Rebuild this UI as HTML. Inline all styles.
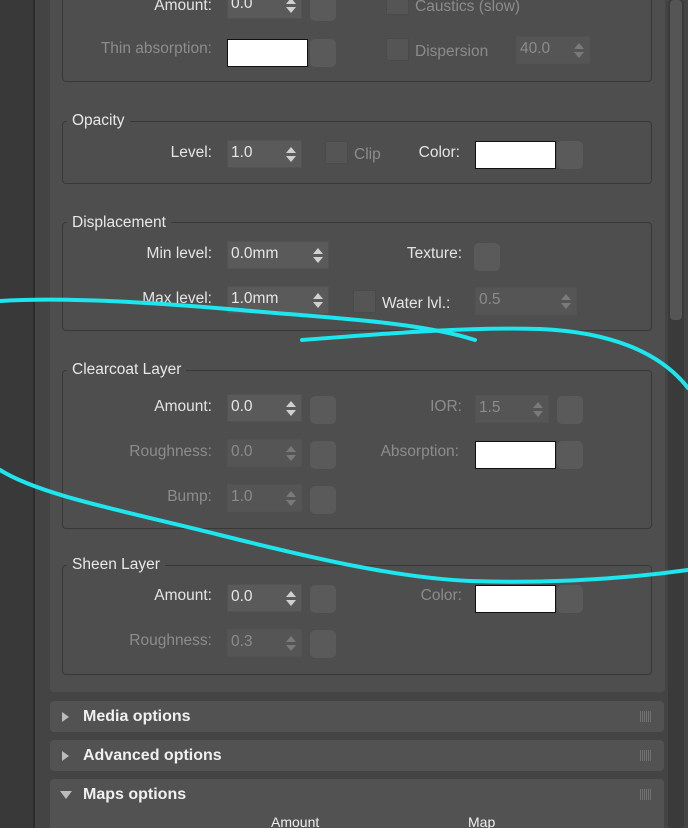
<!DOCTYPE html>
<html><head><meta charset="utf-8"><style>
*{box-sizing:border-box;margin:0;padding:0}
html{width:688px;height:828px;overflow:hidden}
body{width:688px;height:828px;overflow:hidden;background:#444;font-family:"Liberation Sans","DejaVu Sans",sans-serif;font-size:15.5px;color:#e4e4e4;position:relative}
.a{position:absolute}
.lbl{position:absolute;text-align:right;white-space:nowrap;line-height:18px;margin-top:1px}
.t{position:absolute;white-space:nowrap;line-height:18px;margin-top:1px}
.dis{color:#8c8c8c}
.grp{position:absolute;border:1px solid #383838;border-radius:4px}
.gt{position:absolute;background:#4e4e4e;padding:0 5px;line-height:18px;color:#e8e8e8;margin-top:1px}
.sp{position:absolute;height:28px;background:#5a5a5a;border:1px solid #535353;padding:2px 0 0 3px;line-height:20px;color:#e6e6e6}
.sp.d{color:#8c8c8c;background:#555}
.sp:after{content:"";position:absolute;right:5px;top:6px;border:5px solid transparent;border-top:none;border-bottom:6px solid #d0d0d0;width:0}
.sp:before{content:"";position:absolute;right:5px;top:15px;border:5px solid transparent;border-bottom:none;border-top:6px solid #d0d0d0;width:0}
.sp.d:after{border-bottom-color:#7a7a7a}.sp.d:before{border-top-color:#7a7a7a}
.btn{position:absolute;width:26px;height:28px;background:#5a5a5a;border-radius:5px}
.sw{position:absolute;width:81px;height:28px;background:#fff;border:1px solid #111}
.cb{position:absolute;width:23px;height:23px;background:#555;border:1px solid #4a4a4a}
.roll{position:absolute;left:50px;width:614px;background:#525252;border-radius:4px;font-weight:bold;font-size:16px;color:#f0f0f0;overflow:hidden}
.roll span{position:absolute;left:33px;top:7px}
.tri{position:absolute;left:12px;top:11px;border:5px solid transparent;border-left:7px solid #bbb;border-right:none}
.trid{position:absolute;left:10px;top:12px;border:6px solid transparent;border-top:8px solid #bbb;border-bottom:none}
.grip{position:absolute;right:13px;top:10px;width:11px;height:11px;background:repeating-linear-gradient(90deg,#7a7a7a 0 1px,transparent 1px 2px);opacity:.8}
</style></head><body>
<div class="a" style="left:0;top:0;width:33px;height:828px;background:#393939"></div>
<div class="a" style="left:33px;top:0;width:2px;height:828px;background:#2c2c2c"></div>
<div class="a" style="left:50px;top:0;width:615px;height:692px;background:#4e4e4e;border-radius:0 0 4px 4px"></div>
<div class="a" style="left:668px;top:0;width:16px;height:828px;background:#3a3a3a;border-radius:3px"></div>
<div class="a" style="left:670px;top:0;width:12px;height:320px;background:#555;border-radius:4px"></div>

<div class="grp" style="left:62px;top:-10px;width:590px;height:92px"></div>
<div class="lbl" style="right:476px;top:-4px">Amount:</div>
<div class="sp" style="left:227px;top:-9px;width:75px">0.0</div>
<div class="btn" style="left:310px;top:-7px"></div>
<div class="lbl dis" style="right:476px;top:39px">Thin absorption:</div>
<div class="sw" style="left:227px;top:39px"></div>
<div class="btn" style="left:310px;top:39px"></div>
<div class="cb" style="left:386px;top:-8px"></div>
<div class="t dis" style="left:415px;top:-3px">Caustics (slow)</div>
<div class="cb" style="left:386px;top:38px"></div>
<div class="t dis" style="left:415px;top:42px">Dispersion</div>
<div class="sp d" style="left:516px;top:36px;width:74px">40.0</div>

<div class="grp" style="left:62px;top:121px;width:590px;height:63px"></div>
<div class="gt" style="left:67px;top:111px">Opacity</div>
<div class="lbl" style="right:476px;top:143px">Level:</div>
<div class="sp" style="left:227px;top:140px;width:75px">1.0</div>
<div class="cb" style="left:325px;top:141px"></div>
<div class="t dis" style="left:354px;top:145px">Clip</div>
<div class="lbl" style="right:228px;top:143px">Color:</div>
<div class="sw" style="left:475px;top:141px"></div>
<div class="btn" style="left:557px;top:141px"></div>

<div class="grp" style="left:62px;top:222px;width:590px;height:109px"></div>
<div class="gt" style="left:67px;top:213px">Displacement</div>
<div class="lbl" style="right:476px;top:244px">Min level:</div>
<div class="sp" style="left:227px;top:241px;width:102px">0.0mm</div>
<div class="lbl" style="right:226px;top:244px">Texture:</div>
<div class="btn" style="left:474px;top:243px"></div>
<div class="lbl" style="right:476px;top:289px">Max level:</div>
<div class="sp" style="left:227px;top:286px;width:102px">1.0mm</div>
<div class="cb" style="left:353px;top:290px"></div>
<div class="t" style="left:382px;top:294px">Water lvl.:</div>
<div class="sp d" style="left:475px;top:287px;width:102px">0.5</div>

<div class="grp" style="left:62px;top:370px;width:590px;height:159px"></div>
<div class="gt" style="left:67px;top:360px">Clearcoat Layer</div>
<div class="lbl" style="right:476px;top:397px">Amount:</div>
<div class="sp" style="left:227px;top:394px;width:75px">0.0</div>
<div class="btn" style="left:310px;top:396px"></div>
<div class="lbl dis" style="right:226px;top:397px">IOR:</div>
<div class="sp d" style="left:475px;top:395px;width:74px">1.5</div>
<div class="btn" style="left:557px;top:396px"></div>
<div class="lbl dis" style="right:476px;top:442px">Roughness:</div>
<div class="sp d" style="left:227px;top:439px;width:75px">0.0</div>
<div class="btn" style="left:310px;top:441px"></div>
<div class="lbl dis" style="right:229px;top:442px">Absorption:</div>
<div class="sw" style="left:475px;top:441px"></div>
<div class="btn" style="left:557px;top:441px"></div>
<div class="lbl dis" style="right:476px;top:487px">Bump:</div>
<div class="sp d" style="left:227px;top:484px;width:75px">1.0</div>
<div class="btn" style="left:310px;top:486px"></div>

<div class="grp" style="left:62px;top:565px;width:590px;height:110px"></div>
<div class="gt" style="left:67px;top:555px">Sheen Layer</div>
<div class="lbl" style="right:476px;top:586px">Amount:</div>
<div class="sp" style="left:227px;top:584px;width:75px">0.0</div>
<div class="btn" style="left:310px;top:585px"></div>
<div class="lbl dis" style="right:226px;top:586px">Color:</div>
<div class="sw" style="left:475px;top:585px"></div>
<div class="btn" style="left:557px;top:585px"></div>
<div class="lbl dis" style="right:476px;top:631px">Roughness:</div>
<div class="sp d" style="left:227px;top:629px;width:75px">0.3</div>
<div class="btn" style="left:310px;top:630px"></div>

<div class="roll" style="top:701px;height:31px"><div class="tri"></div><span>Media options</span><div class="grip"></div></div>
<div class="roll" style="top:740px;height:31px"><div class="tri"></div><span>Advanced options</span><div class="grip"></div></div>
<div class="roll" style="top:779px;height:49px;border-radius:4px 4px 0 0"><div class="trid"></div><span>Maps options</span><div class="grip"></div>
<div class="t" style="left:221px;top:33px;font-weight:normal;font-size:14px">Amount</div>
<div class="t" style="left:418px;top:33px;font-weight:normal;font-size:14px">Map</div></div>

<svg class="a" style="left:0;top:0" width="688" height="828">
<g fill="none" stroke="#1ee6ee" stroke-width="4" stroke-linecap="round">
<path d="M0,301 C60,297 150,302 240,310 C330,318 420,322 475,340"/>
<path d="M302,340 C380,334 460,327 540,329 C610,332 660,352 688,388"/>
<path d="M0,470 C40,495 120,510 220,535 C320,560 400,578 470,581 C560,584 630,578 688,570"/>
</g></svg>
</body></html>
